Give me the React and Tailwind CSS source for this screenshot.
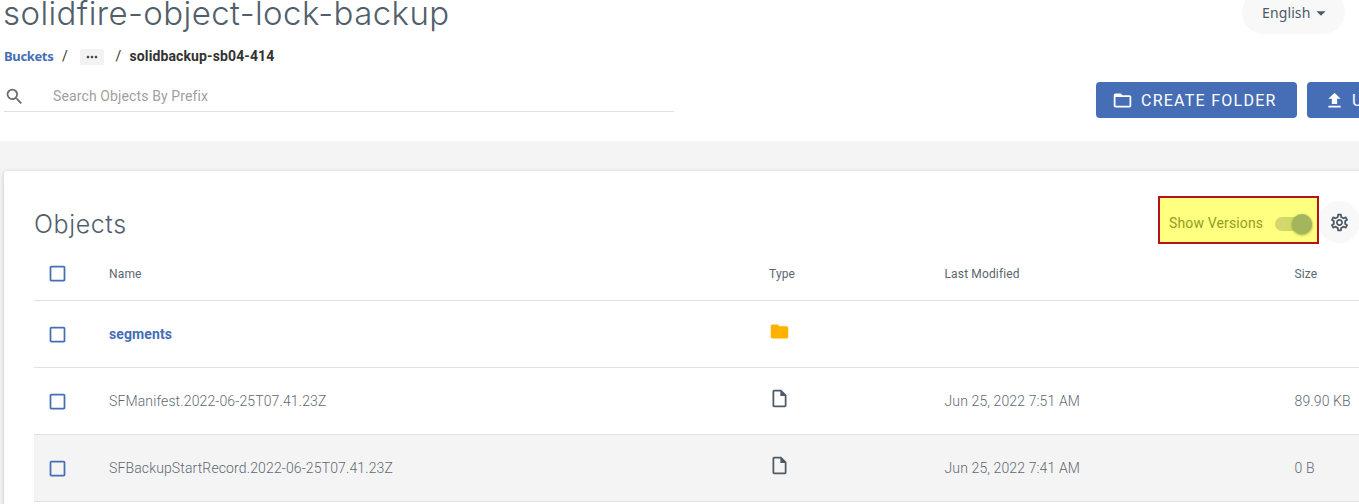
import React from "react";
import {
  MdSearch,
  MdMoreHoriz,
  MdArrowDropDown,
  MdFolderOpen,
  MdFileUpload,
  MdFolder,
  MdOutlineInsertDriveFile,
  MdCheckBoxOutlineBlank,
  MdOutlineSettings,
} from "react-icons/md";

const files = [
  { name: "segments", folder: true },
  {
    name: "SFManifest.2022-06-25T07.41.23Z",
    modified: "Jun 25, 2022 7:51 AM",
    size: "89.90 KB",
  },
  {
    name: "SFBackupStartRecord.2022-06-25T07.41.23Z",
    modified: "Jun 25, 2022 7:41 AM",
    size: "0 B",
    active: true,
  },
];

const columns =
  "grid grid-cols-[75px_660px_175.5px_350px_150px] border-b border-[#e0e0e0]";

function Checkbox() {
  return <MdCheckBoxOutlineBlank size={21} className="ml-[13px] text-[#466eb6]" />;
}

function TopBar() {
  return (
    <header className="h-[141px] bg-white">
      <div className="flex h-[34px] justify-between pl-[3px] pr-[14px]">
        <h1 className="h-[34px] whitespace-nowrap font-[Inter] text-[33px] font-light leading-[26px] tracking-[0.4px] text-[#525f6b]">
          solidfire-object-lock-backup
        </h1>
        <button className="-mt-[9px] flex h-[43px] w-[103px] items-center rounded-[22px] bg-[#f8f8f8] pl-[19.5px] pt-[1px] text-[#4c5a67]">
          <span className="-mt-[2px] w-[49.5px] whitespace-nowrap font-['Noto_Sans'] text-[14px] tracking-[0.1px]">
            English
          </span>
          <MdArrowDropDown size={22} className="-ml-[1px]" />
        </button>
      </div>
      <nav className="flex h-[44px] items-center pl-1 text-sm text-[#333]">
        <a className="w-[58px] whitespace-nowrap font-['Noto_Sans'] text-[13px] font-bold tracking-[-0.35px] text-[#466eb6]">
          Buckets
        </a>
        <span className="w-[18px]">/</span>
        <span className="mt-[2px] flex h-4 w-6 items-center justify-center rounded-[2px] bg-[#f2f2f2]">
          <MdMoreHoriz size={16} className="text-[#444]" />
        </span>
        <span className="ml-[11.5px] w-[14px]">/</span>
        <b className="whitespace-nowrap font-bold tracking-[0.12px]">
          solidbackup-sb04-414
        </b>
      </nav>
      <div className="flex justify-between pl-1">
        <div className="flex h-[34px] w-[670px] items-center border-b border-[#e0e0e0] pt-[3px]">
          <MdSearch size={21} className="text-[#6b6b6b]" />
          <span className="ml-[28px] text-sm tracking-[0.12px] text-[#a0a0a0]">
            Search Objects By Prefix
          </span>
        </div>
        <div className="mt-1 flex w-[263px] gap-[10px] overflow-hidden text-white">
          <button className="flex h-9 w-[201px] shrink-0 items-center rounded-[4px] bg-[#466eb6] pl-4">
            <MdFolderOpen size={21} />
            <span className="ml-2 mt-[2px] whitespace-nowrap text-[16px] tracking-[1.25px]">
              CREATE FOLDER
            </span>
          </button>
          <button className="flex h-9 w-[140px] shrink-0 items-center rounded-[4px] bg-[#466eb6] pl-[17px]">
            <MdFileUpload size={21} />
            <span className="ml-[7px] mt-[2px] text-[16px] tracking-[1.25px]">U</span>
          </button>
        </div>
      </div>
    </header>
  );
}

function VersionsToggle() {
  return (
    <div className="relative z-10 flex h-12 w-[161px] items-center border-2 border-[#b5131b] bg-[#ffff80] pl-[9px] pt-[7px]">
      <span className="h-5 w-[106px] whitespace-nowrap pt-[2px] text-sm leading-[14px] tracking-[0.14px] text-[#949c20]">
        Show Versions
      </span>
      <div className="flex h-[14px] w-[37px] items-center justify-end rounded-full bg-[#d1d96c]">
        <span className="h-5 w-5 shrink-0 rounded-full bg-[#a3b65c] shadow-[0_1px_3px_#8f9a3c]" />
      </div>
    </div>
  );
}

function ObjectsCard() {
  return (
    <section className="ml-1 mt-[30px] h-[400px] w-[1400px] rounded-[4px] bg-white pl-[30px] pt-[25px] shadow-[0_1px_4px_rgba(0,0,0,0.22)]">
      <div className="flex h-[51px] w-[1326px] items-start">
        <h2 className="h-12 flex-1 pt-[8px] font-[Inter] text-[25px] font-light leading-[40px] tracking-[0.6px] text-[#525f6b]">
          Objects
        </h2>
        <VersionsToggle />
        <button className="-ml-[1px] mt-[5px] flex h-[42px] w-[42px] items-center justify-center rounded-full bg-[#f8f8f8]">
          <MdOutlineSettings size={21} className="text-[#4c5a67]" />
        </button>
      </div>
      <div className={`${columns} h-[54px] items-center text-xs tracking-[0.15px] text-[#5b6670]`}>
        <Checkbox />
        <span>Name</span>
        <span>Type</span>
        <span>Last Modified</span>
        <span>Size</span>
      </div>
      {files.map((f) => (
        <div
          key={f.name}
          className={`${columns} h-[67px] items-center text-sm font-light text-[#5f6972] ${f.active ? "bg-[#f4f4f4]" : ""}`}
        >
          <span className="pt-px">
            <Checkbox />
          </span>
          {f.folder ? (
            <b className="font-bold tracking-[0.12px] text-[#466eb6]">{f.name}</b>
          ) : (
            <span className="tracking-[0.13px]">{f.name}</span>
          )}
          <span className="pb-[5px]">
            {f.folder ? (
              <MdFolder size={21} className="text-[#ffb300]" />
            ) : (
              <MdOutlineInsertDriveFile size={21} className="text-[#4c5a67]" />
            )}
          </span>
          <span className="tracking-[0.12px]">{f.modified}</span>
          <span className="tracking-[0.12px]">{f.size}</span>
        </div>
      ))}
    </section>
  );
}

export default function App() {
  return (
    <div className="h-[504px] w-[1359px] overflow-hidden bg-[#f4f4f4] font-[Roboto]">
      <TopBar />
      <ObjectsCard />
    </div>
  );
}
